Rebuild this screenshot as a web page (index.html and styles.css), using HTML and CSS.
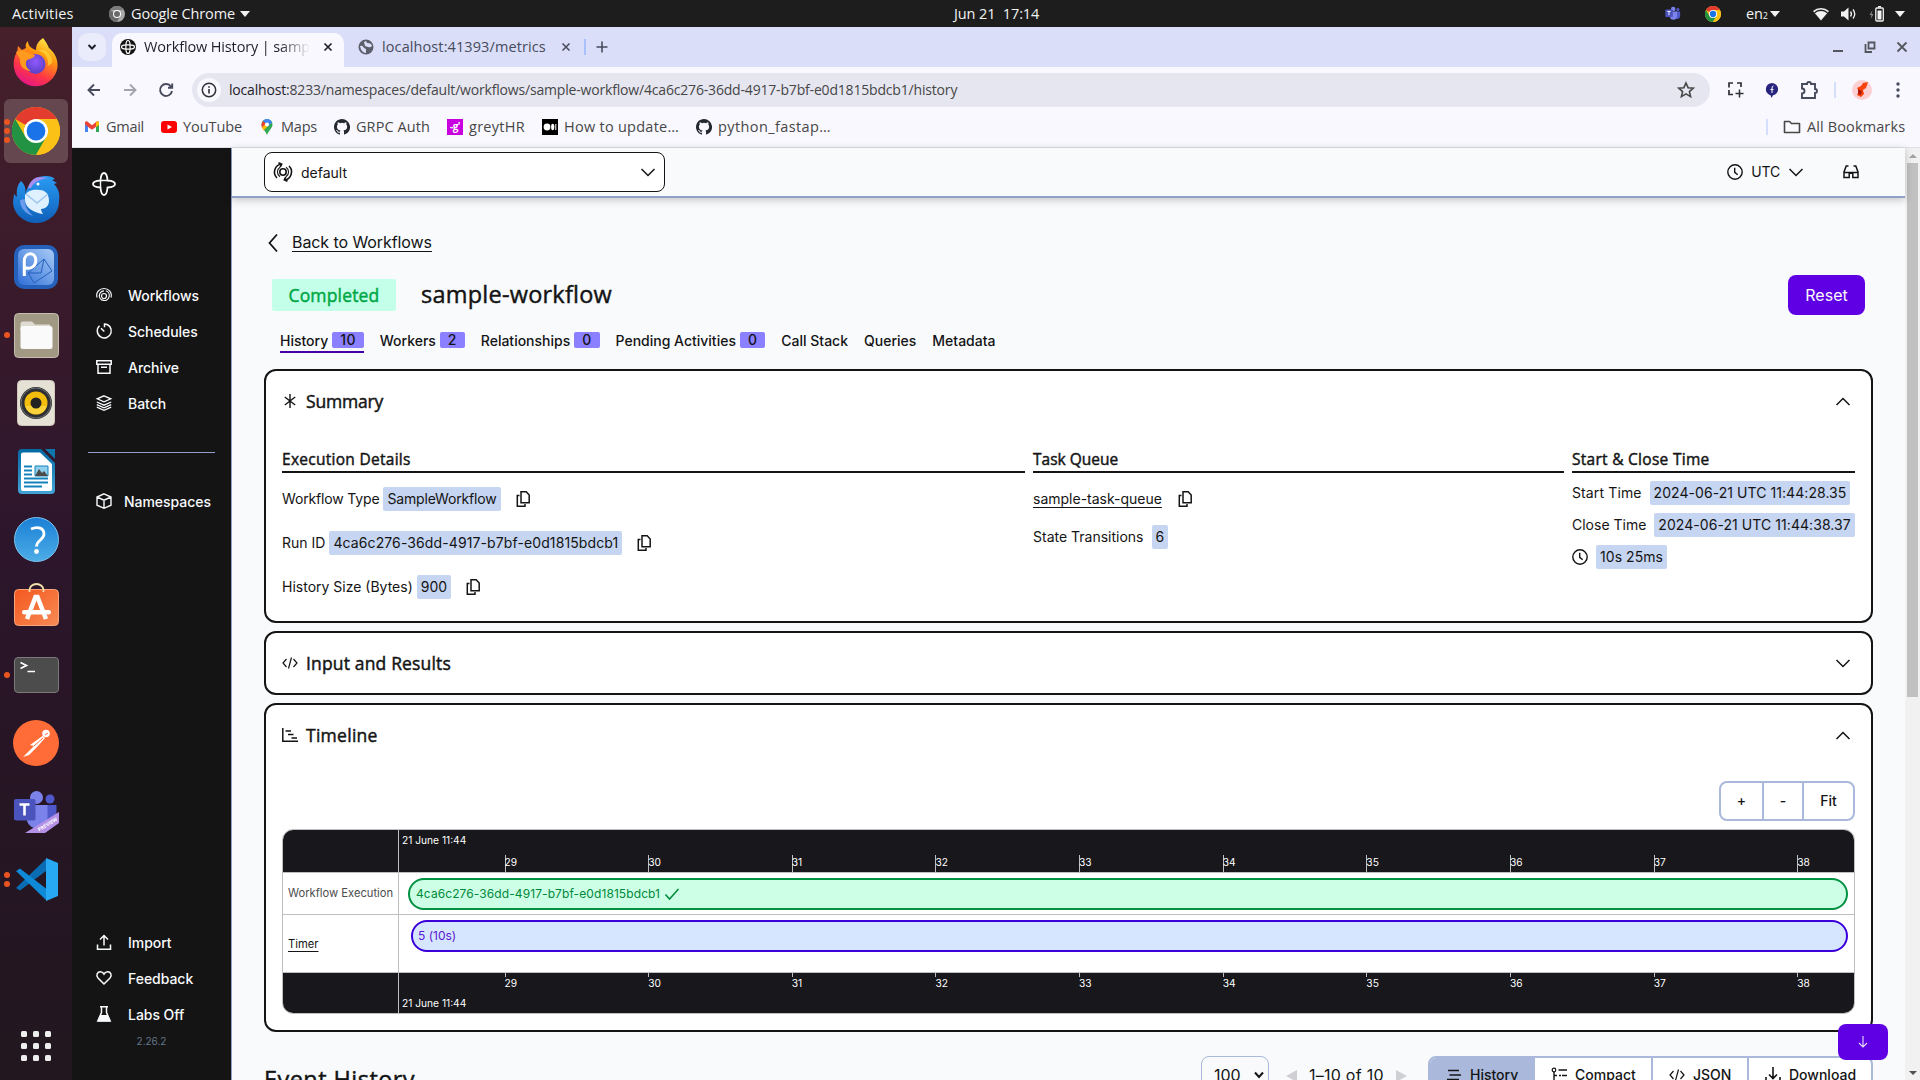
FILE: index.html
```html
<!DOCTYPE html>
<html lang="en">
<head>
<meta charset="utf-8">
<title>Workflow History | sample-workflow</title>
<link rel="stylesheet" href="styles.css">
</head>
<body>
<svg class="defs" width="0" height="0">
  <defs>
    <linearGradient id="ffGrad" x1="0.8" y1="0" x2="0.3" y2="1"><stop offset="0" stop-color="#fff44f"/><stop offset=".35" stop-color="#ff980e"/><stop offset=".7" stop-color="#ff3647"/><stop offset="1" stop-color="#e31587"/></linearGradient>
    <radialGradient id="ffGlobe" cx=".5" cy=".4" r=".6"><stop offset="0" stop-color="#9059ff"/><stop offset="1" stop-color="#5b3fc4"/></radialGradient>
    <linearGradient id="tbGrad" x1="0" y1="0" x2="0" y2="1"><stop offset="0" stop-color="#2a9bf4"/><stop offset="1" stop-color="#0f5fb8"/></linearGradient>
    <linearGradient id="pGrad" x1="1" y1="0" x2="0" y2="1"><stop offset="0" stop-color="#a8cbf7"/><stop offset="1" stop-color="#2f6fd6"/></linearGradient>
    <linearGradient id="bagGrad" x1="0" y1="0" x2="1" y2="1"><stop offset="0" stop-color="#f4581f"/><stop offset="1" stop-color="#f78b55"/></linearGradient>
    <linearGradient id="helpGrad" x1="0" y1="0" x2="0" y2="1"><stop offset="0" stop-color="#1b7fd6"/><stop offset="1" stop-color="#4cade6"/></linearGradient>
    <linearGradient id="wrGrad" x1="0" y1="0" x2="0" y2="1"><stop offset="0" stop-color="#0369a3"/><stop offset="1" stop-color="#43a4d6"/></linearGradient>
    <symbol id="chrome" viewBox="0 0 48 48"><circle cx="24" cy="24" r="24" fill="#fbc116"/><path d="M24 24 3.2 12A24 24 0 0 1 44.8 12H24z" fill="#e33b2e"/><path d="M3.2 12A24 24 0 0 0 24 48L34.4 30 24 24 13.6 30z" fill="#229342"/><path d="M24 12h20.8A24 24 0 0 1 24 48l10.4-18z" fill="#fbc116"/><circle cx="24" cy="24" r="12" fill="#fff"/><circle cx="24" cy="24" r="9.4" fill="#1a73e8"/></symbol>
    <symbol id="copy" viewBox="0 0 16 16"><path d="M6 .8h5.200L14.200 4v7.700H6zM4.500 4.500H2.300V15.200H10V13" fill="none" stroke="#141414" stroke-width="1.500"/></symbol>
    <symbol id="clock" viewBox="0 0 16 16"><circle cx="8" cy="8" r="7.200" fill="none" stroke="#141414" stroke-width="1.400"/><path d="M7.700 3.800v4.500l3 2.500" fill="none" stroke="#141414" stroke-width="1.400"/></symbol>
    <symbol id="down" viewBox="0 0 16 10"><path d="m1.500 2 6.500 6.500L14.500 2" fill="none" stroke="#141414" stroke-width="1.500"/></symbol>
    <symbol id="up" viewBox="0 0 16 10"><path d="M1.500 9 8 2.500 14.500 9" fill="none" stroke="#141414" stroke-width="1.500"/></symbol>
    <symbol id="github" viewBox="0 0 16 16"><path fill="#24292f" d="M8 0C3.580 0 0 3.580 0 8c0 3.540 2.290 6.530 5.470 7.590.4.070.55-.17.55-.38v-1.490c-2.010.37-2.530-.49-2.690-.94-.09-.23-.48-.94-.82-1.130-.28-.15-.68-.52-.01-.53.63-.01 1.080.58 1.230.82.72 1.210 1.870.87 2.330.66.070-.52.28-.87.51-1.070-1.780-.2-3.640-.89-3.640-3.950 0-.87.31-1.590.82-2.150-.08-.2-.36-1.020.08-2.120 0 0 .67-.21 2.200.82a7.600 7.600 0 0 1 4 0c1.530-1.040 2.200-.82 2.200-.82.44 1.100.16 1.920.08 2.120.51.56.82 1.270.82 2.150 0 3.070-1.870 3.750-3.650 3.950.29.25.54.73.54 1.480v2.200c0 .21.15.46.55.38A8 8 0 0 0 8 0z"/></symbol>
    <symbol id="code" viewBox="0 0 16 16"><path d="M4.500 4 1 8l3.500 4M11.500 4 15 8l-3.500 4M9.500 2.500l-3 11" fill="none" stroke="#141414" stroke-width="1.200"/></symbol>
    <symbol id="teams" viewBox="0 0 46 46"><circle cx="23.500" cy="8.500" r="6.500" fill="#7b83eb"/><circle cx="37" cy="10" r="4.500" fill="#5059c9"/><path d="M30 16h13.500v13a8 8 0 0 1-13.500 6z" fill="#5059c9"/><path d="M14 16h20.500v14a10.500 10.500 0 0 1-20.500 2z" fill="#7b83eb"/><rect x="1" y="10" width="21.500" height="21.500" rx="2" fill="#4b53bc"/><path d="M6.500 15.500h10M11.500 15.500v11" stroke="#fff" stroke-width="2.600"/></symbol>
  </defs>
</svg>

<div class="topbar">
  <span class="ui act">Activities</span>
  <svg class="appicon" width="16" height="16" viewBox="0 0 48 48"><circle cx="24" cy="24" r="24" fill="#a8a8a8"/><path d="M3.200 12A24 24 0 0 1 44.800 12H24z" fill="#7c7c7c"/><path d="M3.200 12A24 24 0 0 0 24 48L34 30z" fill="#6a6a6a"/><circle cx="24" cy="24" r="12" fill="#fff"/><circle cx="24" cy="24" r="9" fill="#6a6a6a"/></svg>
  <span class="ui app">Google Chrome</span>
  <i class="tri"></i>
  <span class="ui clock">Jun 21&nbsp; 17:14</span>
  <div class="tray">
    <svg width="16" height="16"><use href="#teams"/></svg>
    <svg width="16" height="16"><use href="#chrome"/></svg>
    <span class="ui lang">en<small>2</small></span><i class="tri"></i>
    <svg class="wifi" width="16" height="14" viewBox="0 0 16 14"><path d="M0 4a12 12 0 0 1 16 0L8 13.500z" fill="#f2f2f2"/><path d="M1.500 5.800a9.500 9.500 0 0 1 13 0" fill="none" stroke="#1d1d1d" stroke-width="1.300"/></svg>
    <svg class="vol" width="16" height="14" viewBox="0 0 16 14"><path d="M0 4.500h3L7.500.5v13L3 9.500H0z" fill="#f2f2f2"/><path d="M9.500 4.500q2 2.500 0 5M12 2.500q3.500 4.500 0 9" fill="none" stroke="#f2f2f2" stroke-width="1.300"/></svg>
    <svg class="bat" width="16" height="16" viewBox="0 0 16 16"><path d="M3.500 4 .5 9h2l-.8 4L4.500 8h-2z" fill="#8a8a8a"/><rect x="6.800" y="2" width="7.500" height="13" rx="1" fill="none" stroke="#f2f2f2" stroke-width="1.300"/><path d="M8.500 4.500h4v9h-4zM9 0h3v1.500H9z" fill="#f2f2f2"/></svg>
    <i class="tri"></i>
  </div>
</div>

<div class="screen">
  <nav class="dock">
    <div class="tile ff"><svg width="46" height="48" viewBox="0 0 46 48"><path d="M30 0c4 5 5 8 6 10 6 5 9 11 8.500 19A22 22 0 0 1 1 30C0 22 2 17 4 14l1-6c2 2 3 3 4 4l4-2c-1-3 0-5 2-7 0 4 2 7 8 9 0-6 3-9 7-12z" fill="url(#ffGrad)"/><circle cx="22.500" cy="26" r="10" fill="url(#ffGlobe)"/><path d="M3 14c5-3 9-2 12 1l7 2c-1 3-5 4-8 5-3 4 0 9 4 11-7 0-12-5-11-12z" fill="#ff9a1f"/><path d="M24 12c8 2 12 8 11 16l4-3c1-6-3-10-7-13z" fill="#ffd43a" opacity=".7"/></svg></div>
    <div class="tile active"><span class="dots"><i></i><i></i><i></i></span><svg width="48" height="48"><use href="#chrome"/></svg></div>
    <div class="tile"><svg width="48" height="48" viewBox="0 0 48 48"><path d="M9 6c5 5 5 9 4 14 2-8 6-15 14-18 7-2 13-1 16 2l-3 1 5 3-3 1c5 5 6 11 5 18A23 21 0 0 1 1 27l1-8 3 3C4 14 6 9 9 6z" fill="url(#tbGrad)"/><path d="M16 13c2-7 6-11 12-11l8 1c-6 1-14 3-17 10z" fill="#a98df0"/><path d="M8 25c0 8 6 14 13 16-6-6-9-11-8-17z" fill="#6c9bee"/><path d="M13 20c3-5 9-6 15-5 6 0 9 5 9 11 0 5-4 8-8 8 0 2 1 3 2 5-8-1-18-6-18-14z" fill="#dff0ff"/><path d="m14 19 11 9 11-9" fill="none" stroke="#9fc6ee" stroke-width="1.500"/><circle cx="26" cy="9" r="1.500" fill="#fff"/></svg></div>
    <div class="tile"><svg width="44" height="44" viewBox="0 0 44 44"><rect width="44" height="44" rx="10" fill="#2560ba"/><rect x="4" y="4" width="36" height="36" rx="6" fill="url(#pGrad)"/><path d="m14 28 16-14 8 12-18 12zM14 28l13 0 3-14" fill="none" stroke="#2560ba"/><path d="M10.300 31V16c0-9.500 11.500-9.500 11.500-1s-8 9.500-11.500 7" fill="none" stroke="#fff" stroke-width="3"/></svg></div>
    <div class="tile"><span class="dots"><i></i></span><svg width="45" height="45" viewBox="0 0 45 45"><rect x=".5" y=".5" width="44" height="44" rx="4" fill="#a29984" stroke="#c5bfb0"/><path d="M6.500 11a2.500 2.500 0 0 1 2.500-2.500h9l3 3H36v6H6.500z" fill="#dedbd0"/><rect x="6.500" y="13" width="32" height="23" rx="2.500" fill="#fbfafa"/></svg></div>
    <div class="tile"><svg width="38" height="46" viewBox="0 0 38 46"><rect x=".5" y=".5" width="37" height="45" rx="4" fill="#e6e1d5" stroke="#cfc9bb"/><circle cx="19" cy="23" r="16" fill="#2e2f33"/><circle cx="19" cy="23" r="15" fill="none" stroke="#6d6e72"/><circle cx="19" cy="23" r="11.500" fill="#f3bd0e"/><path d="M8 26a11.500 11.500 0 0 0 22 0z" fill="#ffe057" opacity=".6"/><circle cx="19" cy="23" r="5.500" fill="#222"/></svg></div>
    <div class="tile"><svg width="37" height="45" viewBox="0 0 37 45"><path d="M4 0h19l14 14v27a4 4 0 0 1-4 4H4a4 4 0 0 1-4-4V4a4 4 0 0 1 4-4z" fill="url(#wrGrad)"/><path d="M27 0h10v10z" fill="#0f76ad"/><path d="M5 3.500h17L34 15v25a2 2 0 0 1-2 2H5a2 2 0 0 1-2-2V5.500a2 2 0 0 1 2-2z" fill="#fff"/><path d="M6 17.500h8M6 21.500h8M6 25.500h8M6 29.500h24M6 33.500h24M6 37.500h18" stroke="#1483bd" stroke-width="2"/><path d="M17 17h13v10H17z" fill="#8fd0ef" stroke="#1483bd"/><path d="m17 27 4-7 3 4 2-2 4 5z" fill="#4b4b4b"/></svg></div>
    <div class="tile"><svg width="45" height="45" viewBox="0 0 45 45"><circle cx="22.500" cy="22.500" r="22" fill="url(#helpGrad)" stroke="#7cc2ee"/><path d="M17 12c7-3 13-1 13 5 0 6-7.500 6-7.500 12.500" fill="none" stroke="#fff" stroke-width="2.800"/><circle cx="22.500" cy="34.500" r="2.400" fill="#fff"/></svg></div>
    <div class="tile up2"><svg width="45" height="43" viewBox="0 0 45 43"><rect x=".5" y="6.500" width="44" height="36" rx="4" fill="url(#bagGrad)" stroke="#f9a57c"/><path d="M15.500 9V7a7 6 0 0 1 14 0v2" fill="none" stroke="#f5dfae" stroke-width="1.800"/><path d="m13 36 8.500-22h2L32 36" fill="none" stroke="#fff" stroke-width="4.500"/><rect x="8" y="27" width="29" height="4.500" rx="2.200" fill="#fff"/></svg></div>
    <div class="tile"><span class="dots"><i></i></span><svg width="45" height="36" viewBox="0 0 45 36"><rect x=".5" y=".5" width="44" height="35" rx="3.500" fill="#4c4c4c" stroke="#7a7a7a"/><path d="m6.500 5.500 6 3-6 3M13.500 14.500h7.500" fill="none" stroke="#fff" stroke-width="1.700"/></svg></div>
    <div class="tile"><svg width="46" height="46" viewBox="0 0 46 46"><circle cx="23" cy="23" r="23" fill="#ff6c37"/><circle cx="33" cy="13.500" r="3.800" fill="#fff"/><path d="M29.500 16 17 25l4 1-11 11 6-2 9-9 7-8z" fill="#fff"/><path d="m30 18-9 8M32 15l3-2" stroke="#ff6c37"/></svg></div>
    <div class="tile tm"><svg width="46" height="46" viewBox="0 0 46 46"><use href="#teams" width="46" height="46"/><path d="M12 44 46 23v11L32 44z" fill="#b491e6"/><text x="26" y="42.500" transform="rotate(-31 26 42.500)" class="pv">PREVIEW</text></svg></div>
    <div class="tile"><span class="dots"><i></i><i></i></span><svg width="43" height="43" viewBox="0 0 43 43"><path d="M1 30 31 1v12L5 32.500z" fill="#0a6db3"/><path d="m1 13 4-2.500 26 20V42z" fill="#0f8ad6"/><path d="m31 0 12 5v33l-12 5z" fill="#27a9f3"/></svg></div>
    <div class="apps"><i></i><i></i><i></i><i></i><i></i><i></i><i></i><i></i><i></i></div>
  </nav>

  <div class="window">
    <div class="tabstrip">
      <div class="tabsearch"><svg width="10" height="8" viewBox="0 0 10 8"><path d="m1.500 2 3.500 3.500L8.500 2" fill="none" stroke="#1f2128" stroke-width="2"/></svg></div>
      <div class="tab on">
        <svg width="16" height="16" viewBox="0 0 16 16"><circle cx="8" cy="8" r="8" fill="#141414"/><path d="M8 1.500c1.600 0 2 2.500 2.100 4.400 1.900.1 4.400.5 4.400 2.100s-2.500 2-4.400 2.100C10 12 9.600 14.500 8 14.500S6 12 5.900 10.100C4 10 1.500 9.600 1.500 8S4 6 5.900 5.900C6 4 6.400 1.500 8 1.500zM5.900 5.900h4.200v4.200H5.900z" fill="none" stroke="#fff" stroke-width="1.200"/></svg>
        <span class="ui tt fade">Workflow History | samp</span>
        <svg class="x" width="10" height="10" viewBox="0 0 10 10"><path d="m1.500 1.500 7 7m0-7-7 7" stroke="#1f2128" stroke-width="1.700"/></svg>
      </div>
      <div class="tab">
        <svg width="16" height="16" viewBox="0 0 16 16"><circle cx="8" cy="8" r="7.500" fill="#5b5f6b"/><path d="M2 7q3-1 4 2l2 1v4q-5-.5-6-7zM8 2q1 3 3 2 3 1 3 3-2 2-4 1L7 7 6 3z" fill="#dadef8"/></svg>
        <span class="ui tt t2">localhost:41393/metrics</span>
        <svg class="x" width="10" height="10" viewBox="0 0 10 10"><path d="m1.500 1.500 7 7m0-7-7 7" stroke="#474b5c" stroke-width="1.500"/></svg>
      </div>
      <i class="vsep"></i>
      <svg class="plus" width="12" height="12" viewBox="0 0 12 12"><path d="M6 .5v11M.5 6h11" stroke="#474b5c" stroke-width="1.600"/></svg>
      <div class="winctl">
        <svg width="12" height="12" viewBox="0 0 12 12"><path d="M1 10h10" stroke="#55575f" stroke-width="2"/></svg>
        <svg width="12" height="12" viewBox="0 0 12 12"><path d="M4.500 1.500h6v6h-6zM1.500 3v8H8" fill="none" stroke="#55575f" stroke-width="1.800"/></svg>
        <svg width="12" height="12" viewBox="0 0 12 12"><path d="m1.500 1.500 9 9m0-9-9 9" stroke="#55575f" stroke-width="1.800"/></svg>
      </div>
    </div>
    <div class="toolbar">
      <svg width="16" height="16" viewBox="0 0 16 16"><path d="M14 8H2.500M8 2.500 2.500 8 8 13.500" fill="none" stroke="#474b5c" stroke-width="1.900"/></svg>
      <svg width="16" height="16" viewBox="0 0 16 16"><path d="M2 8h11.500M8 2.500 13.500 8 8 13.500" fill="none" stroke="#a3a4ad" stroke-width="1.900"/></svg>
      <svg width="16" height="16" viewBox="0 0 16 16"><path d="M13 4.500A6 6 0 1 0 14 9M14.200 1.500v4.300H10" fill="none" stroke="#474b5c" stroke-width="1.900"/></svg>
      <div class="omni">
        <span class="info"><svg width="16" height="16" viewBox="0 0 16 16"><circle cx="8" cy="8" r="6.700" fill="none" stroke="#2f3036" stroke-width="1.500"/><path d="M8 7v4.500M8 4.200v1.600" stroke="#2f3036" stroke-width="1.600"/></svg></span>
        <span class="ui url"><b>localhost</b>:8233/namespaces/default/workflows/sample-workflow/4ca6c276-36dd-4917-b7bf-e0d1815bdcb1/history</span>
        <svg class="star" width="18" height="18" viewBox="0 0 18 18"><path d="m9 2 2.100 4.700 5.200.5-3.900 3.400 1.200 5L9 12.900l-4.600 2.700 1.200-5-3.900-3.400 5.200-.5z" fill="none" stroke="#474747" stroke-width="1.600"/></svg>
      </div>
      <div class="ext">
        <svg width="18" height="18" viewBox="0 0 18 18"><path d="M2 6.500V2h4M10 2h4v4M2 9v4.500h4" fill="none" stroke="#2f3036" stroke-width="1.700"/><path d="M12.500 8.500v8M8.500 12.500h8" stroke="#2f3036" stroke-width="1.500"/></svg>
        <svg width="14" height="18" viewBox="0 0 14 18"><path d="M7 2a6.200 6.200 0 0 1 1 12.300L6.500 17l-1-2.800A6.200 6.200 0 0 1 7 2z" fill="#29257f"/><path d="M8.500 5Q7 5 7 7v5M5.500 8.500h3" fill="none" stroke="#fff"/></svg>
        <svg width="20" height="20" viewBox="0 0 20 20"><path d="M3 4h5a2 2 0 0 1 4 0h4v5a2 2 0 0 1 0 4v5H3v-4.500a2.400 2.400 0 0 0 0-5z" fill="none" stroke="#474b5c" stroke-width="1.900"/></svg>
        <i class="vsep2"></i>
        <svg width="20" height="20" viewBox="0 0 20 20"><circle cx="10" cy="10" r="10" fill="#fcd0d3"/><path d="m5 8 4-2 2-3 5-1-2 6-3 2 1 4-3 3-4-2 2-4z" fill="#f6430c"/><path d="m6 9 4 2-1 4-3-1z" fill="#b3190a"/></svg>
        <svg width="4" height="18" viewBox="0 0 4 18"><circle cx="2" cy="3" r="1.700" fill="#474b5c"/><circle cx="2" cy="9" r="1.700" fill="#474b5c"/><circle cx="2" cy="15" r="1.700" fill="#474b5c"/></svg>
      </div>
    </div>
    <div class="bookmarks">
      <a class="w1"><svg width="16" height="16" viewBox="0 0 16 16"><path d="M1 3v10h3V7.500L8 10.500" fill="#4285f4"/><path d="M15 3v10h-3V7.500z" fill="#34a853"/><path d="M1 4c0-2 2-2 3-1l4 3.200L12 3c1-1 3-1 3 1l-.5 2L8 10.800 1.500 6z" fill="#ea4335"/><path d="M12 3c1-1 3-1 3 1v2l-3 2z" fill="#fbbc04"/></svg><span class="ui">Gmail</span></a>
      <a class="w2"><svg width="16" height="16" viewBox="0 0 16 16"><rect y="2" width="16" height="12" rx="3" fill="#f00"/><path d="m6.500 5.500 4.500 2.500-4.500 2.500z" fill="#fff"/></svg><span class="ui">YouTube</span></a>
      <a class="w3"><svg width="16" height="16" viewBox="0 0 16 16"><path d="M8 0a5.500 5.500 0 0 1 5.500 5.500C13.500 9 10 11 8 16 6 11 2.500 9 2.500 5.500A5.500 5.500 0 0 1 8 0z" fill="#34a853"/><path d="M8 0a5.500 5.500 0 0 1 5 3.500L8 8 4 2a5.500 5.500 0 0 1 4-2z" fill="#4285f4"/><path d="m4 2 3 3-4 4C2 6 2.500 3.500 4 2z" fill="#ea4335"/><path d="m3 8.500 4-4 1.500 3-4 4z" fill="#fbbc04"/><circle cx="8" cy="5.500" r="2" fill="#fff"/></svg><span class="ui">Maps</span></a>
      <a class="w4"><svg width="16" height="16"><use href="#github"/></svg><span class="ui">GRPC Auth</span></a>
      <a class="w5"><i class="sq greyt">-g'</i><span class="ui">greytHR</span></a>
      <a class="w6"><svg width="16" height="16" viewBox="0 0 16 16"><path d="M0 0h16v16H0z"/><circle cx="5" cy="8" r="3.400" fill="#fff"/><ellipse cx="10.700" cy="8" rx="1.600" ry="3.200" fill="#fff"/><path d="M13.800 5v6" stroke="#fff"/></svg><span class="ui">How to update…</span></a>
      <a class="w7"><svg width="16" height="16"><use href="#github"/></svg><span class="ui">python_fastap…</span></a>
      <i class="vsep2"></i>
      <a class="w8"><svg width="18" height="16" viewBox="0 0 18 16"><path d="M1.500 2.500h5l2 2h8v9h-15z" fill="none" stroke="#474747" stroke-width="1.600" stroke-linejoin="round"/></svg><span class="ui">All Bookmarks</span></a>
    </div>

    <div class="page">
      <aside class="side">
        <svg class="logo" width="24" height="24" viewBox="0 0 24 24"><path d="M12 1c2.600 0 3.300 4.500 3.500 7.500 3 .2 7.500.9 7.500 3.500s-4.500 3.300-7.500 3.500C15.300 18.500 14.600 23 12 23s-3.300-4.500-3.500-7.500C5.500 15.300 1 14.600 1 12s4.500-3.300 7.500-3.500C8.700 5.500 9.400 1 12 1z" fill="none" stroke="#f8fafc" stroke-width="1.800"/><path d="M8.500 15.500v-7h7" fill="none" stroke="#f8fafc" stroke-width="1.400"/></svg>
        <a><svg width="16" height="16" viewBox="0 0 16 16"><path d="M1 10.500C-.5 5 4 1.500 8 1.500S16.500 5 15 10.500M3.500 9.500A4.700 4.700 0 0 1 8 3.800M3.300 8a5 5 0 1 0 6.500-4.300" fill="none" stroke="#f8fafc" stroke-width="1.200"/><circle cx="8" cy="9" r="2.500" fill="none" stroke="#f8fafc" stroke-width="1.200"/></svg><span>Workflows</span></a>
        <a><svg width="16" height="16" viewBox="0 0 16 16"><path d="M3.500 2.800a7 7 0 1 0 5-1.900v3.300M5 5.200l3.300 3.300" fill="none" stroke="#f8fafc" stroke-width="1.500"/></svg><span>Schedules</span></a>
        <a><svg width="16" height="16" viewBox="0 0 16 16"><path d="M.8 1.800h14.400v3.400H.8zM2 5.200v9h12v-9M5 8.200h6" fill="none" stroke="#f8fafc" stroke-width="1.500"/></svg><span>Archive</span></a>
        <a><svg width="16" height="16" viewBox="0 0 16 16"><path d="m8 .8 6.800 3L8 6.800l-6.800-3zM.8 7 8 10.200 15.200 7M.8 9.600 8 12.800l7.200-3.200M.8 12.200 8 15.300l7.200-3.100" fill="none" stroke="#f8fafc" stroke-width="1.300"/></svg><span>Batch</span></a>
        <hr>
        <a class="ns"><svg width="16" height="16" viewBox="0 0 16 16"><path d="m8 .8 7 3.200v8.200L8 15.300 1 12.200V4zM1 4l7 3.200L15 4M8 7.200v8" fill="none" stroke="#f8fafc" stroke-width="1.400"/></svg><span>Namespaces</span></a>
        <div class="grow"></div>
        <a><svg width="16" height="16" viewBox="0 0 16 16"><path d="M1.500 10.500v4.700h13v-4.700M8 11.500V1.500M4 5.500l4-4 4 4" fill="none" stroke="#f8fafc" stroke-width="1.500"/></svg><span>Import</span></a>
        <a><svg width="16" height="16" viewBox="0 0 16 16"><path d="M8 14 2 8C-.5 5 1.500 1.800 4.300 1.800 6 1.800 7.300 2.800 8 4c.7-1.200 2-2.200 3.700-2.200C14.500 1.800 16.500 5 14 8z" fill="none" stroke="#f8fafc" stroke-width="1.500"/></svg><span>Feedback</span></a>
        <a><svg width="16" height="16" viewBox="0 0 16 16"><path d="M4 .8h8M5.500 1v5.500L1.800 15h12.400l-3.700-8.500V1" fill="none" stroke="#f8fafc" stroke-width="1.500"/><path d="M4.500 9h7l2.700 6.500H1.800z" fill="#f8fafc"/></svg><span>Labs Off</span></a>
        <p class="ver">2.26.2</p>
      </aside>

      <div class="main">
        <header class="hdr">
          <div class="nssel">
            <svg width="20" height="22" viewBox="0 0 20 22"><circle cx="10" cy="11" r="3.200" fill="none" stroke="#141414" stroke-width="1.600"/><path d="M8.500 3a8.200 8.200 0 0 0-4.500 14M5.500 1.800l3.200 1.400-1.500 3M11.500 19a8.200 8.200 0 0 0 4.500-14M14.500 20.200l-3.200-1.400 1.500-3" fill="none" stroke="#141414" stroke-width="1.600"/><path d="M7 6.300a5.600 5.600 0 0 0 0 9.400M13 15.700a5.600 5.600 0 0 0 0-9.400" fill="none" stroke="#141414" stroke-width="1.100"/></svg>
            <span>default</span>
            <svg class="r" width="16" height="10"><use href="#down"/></svg>
          </div>
          <div class="tz"><svg width="16" height="16"><use href="#clock"/></svg><span>UTC</span><svg width="16" height="10"><use href="#down"/></svg></div>
          <svg class="glasses" width="16" height="14" viewBox="0 0 16 14"><path d="M5.500 1H3.200L1 7v5.500h5.200V8.200h3.600v4.300H15V7l-2.200-6h-2.300M1 7.500h14" fill="none" stroke="#141414" stroke-width="1.500"/></svg>
        </header>
        <div class="content">
          <a class="back"><svg width="12" height="20" viewBox="0 0 12 20"><path d="M10 1.500 2.500 10l7.500 8.500" fill="none" stroke="#141414" stroke-width="1.800"/></svg><span>Back to Workflows</span></a>
          <div class="titlerow"><span class="status hd">Completed</span><h1 class="hd">sample-workflow</h1><button class="reset">Reset</button></div>
          <div class="tabs">
            <a class="cur"><span>History</span> <b>10</b></a><a><span>Workers</span> <b>2</b></a><a><span>Relationships</span> <b>0</b></a><a><span>Pending Activities</span> <b>0</b></a><a>Call Stack</a><a>Queries</a><a>Metadata</a>
          </div>

          <section class="card">
            <div class="ch"><svg width="16" height="16" viewBox="0 0 16 16"><path d="M8 1v14M2.800 4l10.400 8M13.200 4 2.800 12" stroke="#141414" stroke-width="1.400"/></svg><h2 class="hd s1">Summary</h2><svg class="r" width="16" height="10"><use href="#up"/></svg></div>
            <div class="sum">
              <div class="c1">
                <h3 class="hd s2">Execution Details</h3>
                <p class="wt"><span>Workflow Type</span><b>SampleWorkflow</b><svg width="16" height="16"><use href="#copy"/></svg></p>
                <p class="rid"><span>Run ID</span><b>4ca6c276-36dd-4917-b7bf-e0d1815bdcb1</b><svg width="16" height="16"><use href="#copy"/></svg></p>
                <p><span>History Size (Bytes)</span><b>900</b><svg width="16" height="16"><use href="#copy"/></svg></p>
              </div>
              <div class="c2">
                <h3 class="hd">Task Queue</h3>
                <p><u>sample-task-queue</u><svg width="16" height="16"><use href="#copy"/></svg></p>
                <p><span>State Transitions</span><b>6</b></p>
              </div>
              <div class="c3">
                <h3 class="hd s2">Start &amp; Close Time</h3>
                <p class="st"><span>Start Time</span><b>2024-06-21 UTC 11:44:28.35</b></p>
                <p><span>Close Time</span><b>2024-06-21 UTC 11:44:38.37</b></p>
                <p><svg width="16" height="16"><use href="#clock"/></svg><b>10s 25ms</b></p>
              </div>
            </div>
          </section>

          <section class="card">
            <div class="ch"><svg width="16" height="16"><use href="#code"/></svg><h2 class="hd s3">Input and Results</h2><svg class="r" width="16" height="10"><use href="#down"/></svg></div>
          </section>

          <section class="card tlc">
            <div class="ch"><svg width="16" height="16" viewBox="0 0 16 16"><path d="M.8 1v13.200H16M3.500 4H9M6 7.500h5.500M9.500 11H15" fill="none" stroke="#141414" stroke-width="1.500"/></svg><h2 class="hd s2">Timeline</h2><svg class="r" width="16" height="10"><use href="#up"/></svg></div>
            <div class="zoom"><span>+</span><span>-</span><span>Fit</span></div>
            <div class="chart">
              <div class="lab dark"></div>
              <div class="axis dark topax"><em>21 June 11:44</em><div class="ticks"><i>29</i><i>30</i><i>31</i><i>32</i><i>33</i><i>34</i><i>35</i><i>36</i><i>37</i><i>38</i></div></div>
              <div class="lab l1"><span>Workflow Execution</span></div>
              <div class="lane l1"><div class="bar g"><span>4ca6c276-36dd-4917-b7bf-e0d1815bdcb1</span><svg width="16" height="14" viewBox="0 0 16 14"><path d="m1.500 7.500 4 4.500L14.500 2" fill="none" stroke="#00893a" stroke-width="1.500"/></svg></div></div>
              <div class="lab l2"><u>Timer</u></div>
              <div class="lane l2"><div class="bar b"><span>5 (10s)</span></div></div>
              <div class="lab dark"></div>
              <div class="axis dark botax"><div class="ticks"><i>29</i><i>30</i><i>31</i><i>32</i><i>33</i><i>34</i><i>35</i><i>36</i><i>37</i><i>38</i></div><em>21 June 11:44</em></div>
            </div>
          </section>

          <div class="events">
            <h2 class="hd">Event History</h2>
            <div class="per"><span>100</span><svg width="10" height="8" viewBox="0 0 10 8"><path d="m1 1.500 4 4.500 4-4.500" fill="none" stroke="#141414" stroke-width="2"/></svg></div>
            <i class="pl"></i><span class="pg">1–10 of 10</span><i class="pr"></i>
            <div class="seg">
              <span class="sel"><svg width="16" height="16" viewBox="0 0 16 16"><path d="M2 3.500h11M3.500 8H15M1 12.500h12" stroke="#141414" stroke-width="1.700"/></svg>History</span>
              <span><svg width="16" height="16" viewBox="0 0 16 16"><circle cx="3" cy="3" r="1.800" fill="none" stroke="#141414" stroke-width="1.200"/><path d="M3 5v9h3M3 8.500h3M7.500 3H16M8 8.500h2M11 8.500h5M8 14h8" fill="none" stroke="#141414" stroke-width="1.400"/></svg>Compact</span>
              <span><svg width="16" height="16"><use href="#code"/></svg>JSON</span>
              <span><svg width="16" height="16" viewBox="0 0 16 16"><path d="M8 0v11M4 7.500l4 4 4-4M1 10v5h3M15 10v5h-3" fill="none" stroke="#141414" stroke-width="1.600"/></svg>Download</span>
            </div>
          </div>
        </div>
        <div class="fab"><svg width="12" height="14" viewBox="0 0 12 14"><path d="M6 1v11M2 8l4 4 4-4" fill="none" stroke="#e8dcff" stroke-width="1.100"/></svg></div>
      </div>
      <div class="sb"><i class="su"></i><i class="th"></i><i class="sd"></i></div>
    </div>
  </div>
</div>
</body>
</html>
```
FILE: styles.css
```css
* { box-sizing: border-box; }
body { margin: 0; width: 1920px; height: 1080px; overflow: hidden; font-family: Inter, "Liberation Sans", sans-serif; font-size: 14px; color: #141414; display: flex; flex-direction: column; }
svg { display: block; flex: none; overflow: visible; }
.defs { position: absolute; }
i, em { font-style: normal; display: block; }
h1, h2, h3, p { margin: 0; }
.ui { font-family: "Open Sans", "Noto Sans", sans-serif; font-size: 14.500px; white-space: nowrap; }
.hd { font-family: "Open Sans", "Noto Sans", sans-serif; font-weight: 400; white-space: nowrap; -webkit-text-stroke: .45px currentColor; }
.s1 { letter-spacing: -.2px; }
.s2 { letter-spacing: .28px; }
.s3 { letter-spacing: .16px; }

/* desktop top bar */
.topbar { flex: none; height: 27px; background: #1d1d1d; color: #f2f2f2; display: flex; align-items: center; padding-left: 12px; }
.topbar .ui { padding-bottom: 1px; }
.topbar .act { width: 97px; letter-spacing: .2px; }
.topbar .app { width: 104px; margin: 0 5px 0 6px; letter-spacing: -.13px; }
.topbar .clock { width: 85px; margin-left: 704px; letter-spacing: -.1px; }
.tri { border: 5px solid transparent; border-top: 6px solid #f2f2f2; border-bottom: 0; width: 0; height: 0; }
.tray { display: flex; align-items: center; margin-left: 626px; }
.tray svg + svg { margin-left: 24px; }
.tray .lang { width: 21px; margin: 0 3px 0 25px; letter-spacing: -.2px; }
.tray .lang small { font-size: 9px; }
.tray .wifi { margin-left: 33px; }
.tray .vol { margin-left: 12px !important; }
.tray .bat { margin: 0 10px 0 12px !important; }

.screen { flex: 1; display: flex; min-height: 0; }

/* dock */
.dock { width: 72px; flex: none; background: linear-gradient(#46202b, #3c1b2b 20%, #2d162c 48%, #281526 65%, #22171f 100%); display: flex; flex-direction: column; align-items: center; gap: 4px; padding-top: 4px; }
.tile { width: 64px; height: 64px; flex: none; border-radius: 6px; display: flex; align-items: center; justify-content: center; position: relative; }
.tile.active { background: #65474f; }
.tile.ff { padding-bottom: 2px; }
.tile.tm { padding-top: 2px; }
.tile.up2 { align-items: flex-start; padding-top: 8px; }
.dots { position: absolute; left: 0; top: 0; height: 64px; display: flex; flex-direction: column; justify-content: center; gap: 3px; }
.dots i { width: 6px; height: 6px; border-radius: 3px; background: #e95420; }
.pv { font: 700 5px "Open Sans", sans-serif; fill: #fff; }
.apps { margin-top: auto; margin-bottom: 19px; display: grid; grid-template-columns: repeat(3, 6px); gap: 6px; }
.apps i { width: 6px; height: 6px; border-radius: 1.500px; background: #eeeeec; }

/* browser chrome */
.window { flex: 1; display: flex; flex-direction: column; min-width: 0; background: #f9f8fe; }
.tabstrip { height: 40px; flex: none; background: #dadef8; display: flex; align-items: center; padding-left: 6px; }
.tabsearch { width: 28px; height: 28px; border-radius: 10px; background: #ebecfb; display: flex; align-items: center; justify-content: center; margin-right: 6px; }
.tab { height: 34px; margin-top: 6px; padding-bottom: 6px; display: flex; align-items: center; width: 240px; padding-left: 14px; }
.tab.on { width: 232px; padding-left: 8px; background: #f9f8fe; border-radius: 10px 10px 0 0; }
.tt { width: 166px; margin: 0 13px 0 8px; color: #1f2128; letter-spacing: -.13px; padding-bottom: 1px; }
.tab.on .tt { -webkit-mask-image: linear-gradient(90deg, #000 82%, transparent); mask-image: linear-gradient(90deg, #000 82%, transparent); }
.tab .t2 { color: #474b5c; letter-spacing: .1px; }
.vsep { width: 2px; height: 16px; background: #a8c0fb; }
.plus { margin-left: 10px; }
.winctl { margin-left: auto; display: flex; gap: 20px; padding-right: 12px; }
.toolbar { height: 46px; flex: none; display: flex; align-items: center; padding-left: 14px; gap: 20px; }
.omni { width: 1518px; height: 34px; border-radius: 17px; background: #e6e6f1; margin-left: -2px; display: flex; align-items: center; padding-left: 5px; }
.info { width: 24px; height: 24px; border-radius: 12px; background: #f9f8fe; display: flex; align-items: center; justify-content: center; margin-right: 8px; }
.url { color: #474747; font-size: 14px; letter-spacing: -.18px; padding-bottom: 2px; }
.url b { font-weight: 400; color: #1f2128; }
.star { margin-left: auto; margin-right: 15px; }
.ext { display: flex; align-items: center; margin-left: -3px; }
.ext svg:nth-child(2) { margin-left: 20px; }
.ext svg:nth-child(3) { margin-left: 20px; }
.ext .vsep2 { margin: 0 16px 0 15px; }
.ext svg:last-child { margin-left: 24px; }
.vsep2 { width: 2px; height: 16px; background: #d3dffc; }
.bookmarks { height: 35px; flex: none; border-bottom: 1px solid #dfdfe6; padding: 0 0 6px 12px; display: flex; align-items: center; color: #474747; }
.bookmarks a { display: flex; align-items: center; gap: 6px; }
.bookmarks .ui { padding-bottom: 2px; }
.w1 { width: 77px; letter-spacing: -.28px; }
.w2 { width: 98px; letter-spacing: -.08px; }
.w3 { width: 75px; letter-spacing: -.2px; }
.w4 { width: 113px; letter-spacing: .08px; }
.w5 { width: 95px; letter-spacing: .28px; }
.w6 { width: 154px; letter-spacing: .26px; }
.w7 { width: 1070px; letter-spacing: .4px; }
.w8 { margin-left: 15px; letter-spacing: .12px; }
.sq { width: 16px; height: 16px; background: #c800e0; color: #fff; font: 700 10px/15px "Open Sans", sans-serif; text-align: center; letter-spacing: -.5px; }

/* web page */
.page { flex: 1; display: flex; min-height: 0; background: #f8fafc; }
.side { width: 160px; flex: none; background: #141414; border-right: 1px solid #929fc7; color: #f8fafc; display: flex; flex-direction: column; padding-bottom: 31px; }
.logo { margin: 24px 0 81px 20px; }
.side a { display: flex; align-items: center; height: 36px; padding-left: 24px; gap: 16px; font-weight: 500; flex: none; letter-spacing: -.04px; }
.side a.ns { gap: 12px; }
.side hr { width: 127px; height: 1px; border: 0; background: #929fc7; margin: 31px 0 30px 16px; flex: none; }
.grow { flex: 1; }
.ver { font-size: 10px; line-height: 16px; margin-top: 1px; color: #64748b; text-align: center; }
.main { flex: 1; display: flex; flex-direction: column; position: relative; min-width: 0; }
.hdr { height: 50px; flex: none; border-bottom: 2px solid #929fc7; box-shadow: 0 2px 8px rgba(0,0,0,.22); display: flex; align-items: center; padding: 0 46px 0 32px; }
.nssel { width: 401px; height: 40px; border: 1px solid #141414; border-radius: 8px; background: #fff; display: flex; align-items: center; padding: 0 8px; gap: 8px; }
.r { margin-left: auto; }
.tz { margin-left: auto; display: flex; align-items: center; gap: 8px; font-size: 14px; }
.tz span { padding-bottom: 1px; letter-spacing: -.2px; }
.glasses { margin-left: 39px; }
.content { padding: 33px 32px 0; flex: 1; min-height: 0; overflow: hidden; }
.back { display: flex; align-items: center; height: 24px; gap: 13px; font-size: 16px; padding-left: 3px; }
.back span { letter-spacing: -.08px; padding-bottom: 2px; }
.back span, u { text-decoration: underline; text-underline-offset: 3px; }
.titlerow { display: flex; align-items: center; height: 40px; margin-top: 20px; padding: 0 8px; }
.status { width: 124px; height: 32px; border-radius: 2px; background: #c4ffea; color: #00a845; display: flex; align-items: center; justify-content: center; font-size: 17.500px; letter-spacing: .17px; margin-right: 25px; padding-bottom: 1px; }
h1 { font-size: 23.500px; letter-spacing: .23px; padding-bottom: 2px; }
.reset { margin-left: auto; width: 77px; height: 40px; border: 0; border-radius: 8px; background: #5f00e4; color: #f8fafc; font: 16px Inter, sans-serif; padding: 0; }
.tabs { display: flex; gap: 16px; margin: 16px 0; padding-left: 16px; height: 22px; font-weight: 500; }
.tabs a { display: flex; align-items: center; gap: 4px; height: 22px; border-bottom: 2px solid transparent; padding-bottom: 2px; }
.tabs a.cur { border-color: #4500a8; }
.tabs b { font-weight: 500; background: #8b80ff; height: 16px; line-height: 16px; padding: 0 8px; border-radius: 2px; letter-spacing: .3px; }
.card { border: 2px solid #141414; border-radius: 12px; background: #fff; margin-bottom: 8px; padding: 0 16px; }
.ch { height: 60px; display: flex; align-items: center; gap: 8px; }
.ch .r { margin-right: 4px; }
h2 { font-size: 17.500px; }
.sum { display: grid; grid-template-columns: 743px 531px 283px; gap: 8px; padding-top: 16px; height: 190px; }
.sum h3 { font-size: 15.500px; line-height: 24px; border-bottom: 2px solid #141414; }
.sum p { display: flex; align-items: center; height: 24px; gap: 4px; white-space: nowrap; }
.sum b { font-weight: 400; background: #c6d5f1; line-height: 23px; height: 24px; padding: 0 4px; border-radius: 2px; }
.sum span, .sum u { line-height: 23px; height: 24px; }
.c1 p { margin: 14px 0 20px; }
.c1 p + p { margin-top: 0; }
.c1 svg, .c2 svg { margin-left: 10px; }
.c1 .wt { letter-spacing: -.16px; }
.c1 .rid b { letter-spacing: .11px; }
.c2 p { margin-top: 14px; gap: 8px; }
.sum .c2 svg { margin-left: 7px; }
.c3 p { margin-top: 8px; gap: 8px; }
.c3 b { letter-spacing: .06px; }
.c3 .st span { letter-spacing: .12px; }
.tlc { padding-bottom: 16px; margin-bottom: 24px; }

/* timeline chart */
.zoom { margin: 16px 0 8px auto; width: 136px; height: 40px; border: 2px solid #aab9db; border-radius: 8px; display: grid; grid-template-columns: 41px 40px 1fr; font-weight: 500; font-size: 14px; line-height: 35px; text-align: center; }
.zoom span + span { border-left: 2px solid #aab9db; }
.chart { width: 1573px; height: 185px; border: 1px solid #bfbfbf; border-radius: 11px; overflow: hidden; display: grid; grid-template-columns: 116px minmax(0, 1fr); grid-template-rows: 42px 43px 58px 40px; font-size: 12px; }
.lab { border-right: 1px solid #bfbfbf; padding-left: 5px; color: #4d4d4d; display: flex; align-items: center; white-space: nowrap; font-size: 11.200px; }
.lab u { color: #141414; }
.dark { background: #18171c; color: #fff; }
.l1, .l2 { border-bottom: 1px solid #bfbfbf; }
.l1 { border-top: 1px solid #bfbfbf; }
.lab.l1 { padding-bottom: 1px; }
.axis { font-size: 10.200px; display: flex; flex-direction: column; justify-content: space-between; }
.axis em { padding-left: 3px; line-height: 14px; }
.topax { padding-top: 3px; }
.botax { padding-bottom: 3px; }
.ticks { display: flex; padding-left: 105.500px; }
.ticks i { width: 143.650px; flex: none; box-shadow: inset 1px 0 #bfbfbf; line-height: 14px; height: 17px; }
.botax .ticks i { box-shadow: none; line-height: 21px; height: 20px; background: linear-gradient(#bfbfbf, #bfbfbf) 0 0 / 1px 4px no-repeat; }
.lane { padding: 5px 6px 0 9px; }
.bar { height: 32px; border: 2px solid; border-radius: 16px; display: flex; align-items: center; gap: 4px; padding-left: 6px; }
.bar span { padding-bottom: 1px; }
.g { border-color: #009142; background: #ccffe6; color: #00893a; letter-spacing: .09px; }
.b { border-color: #3b00d9; background: #d6e6ff; color: #5a18d2; margin-left: 3px; padding-left: 5px; }

.events { display: flex; height: 40px; align-items: center; }
.events h2 { font-size: 23.500px; width: 937px; padding-top: 5px; letter-spacing: .45px; }
.per { width: 68px; height: 40px; border: 1px solid #aab9db; border-radius: 8px; display: flex; align-items: center; padding: 0 4px 3px 12px; justify-content: space-between; font-size: 16px; }
.pl, .pr { border: 6px solid transparent; border-right: 11px solid #cfcfd4; border-left: 0; margin-left: 17px; }
.pr { border-left: 11px solid #cfcfd4; border-right: 0; margin: 0 21px 0 12px; }
.pg { margin-left: 12px; font-size: 16px; letter-spacing: .25px; width: 75px; white-space: nowrap; padding-bottom: 3px; }
.seg { width: 445px; height: 40px; border: 2px solid #aab9db; border-radius: 8px; overflow: hidden; display: grid; grid-template-columns: 105px 118px 96px 1fr; font-weight: 500; background: #fff; }
.seg span { display: flex; align-items: center; gap: 8px; padding: 0 0 3px 16px; border-right: 2px solid #aab9db; }
.seg span:last-child { border: 0; }
.seg .sel { background: #aab9db; }
.fab { position: absolute; left: 1606px; top: 876px; width: 50px; height: 36px; border-radius: 8px; background: #5f00e4; display: flex; align-items: center; justify-content: center; }
.sb { width: 15px; flex: none; background: #f1f1f1; display: flex; flex-direction: column; align-items: center; }
.su { border: 4px solid transparent; border-bottom: 4px solid #a3a3a3; border-top: 0; margin: 6px 0 5px; }
.th { width: 11px; height: 534px; background: #c1c1c1; }
.sd { border: 4px solid transparent; border-top: 4px solid #505050; border-bottom: 0; margin-top: auto; margin-bottom: 5px; }
```
